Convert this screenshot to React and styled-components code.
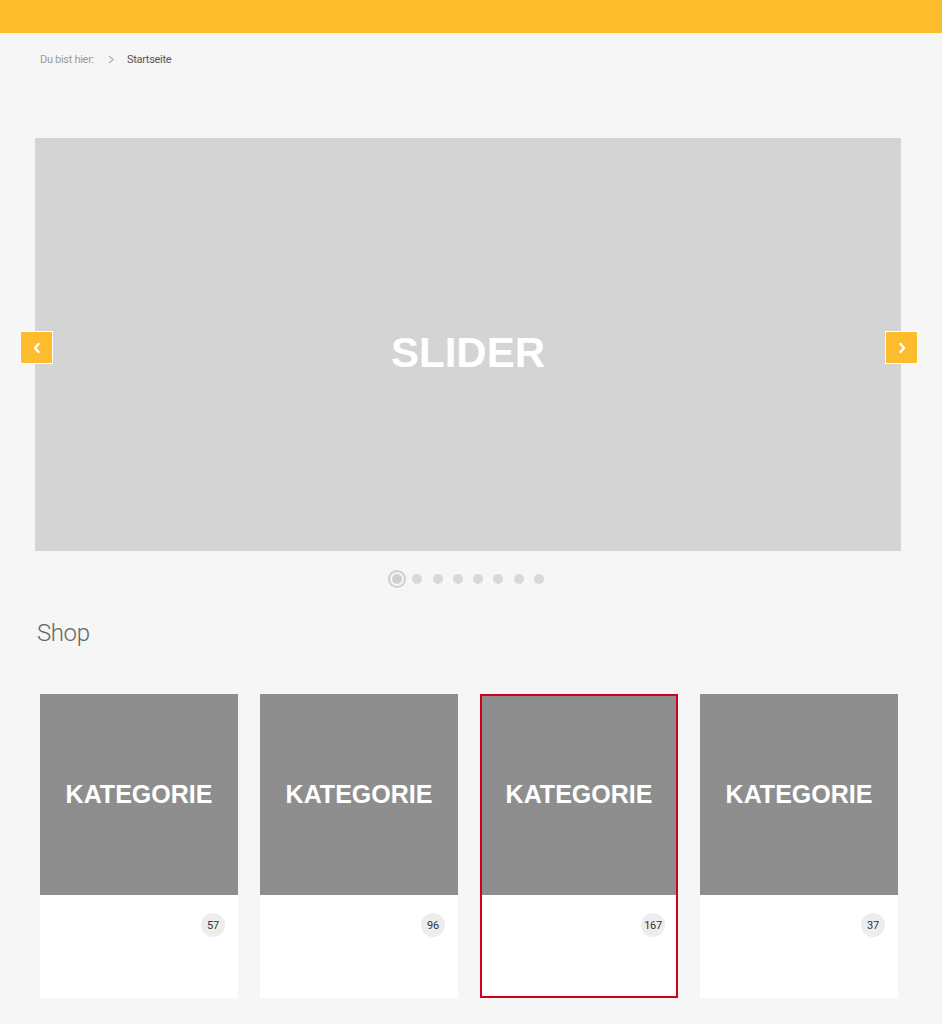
import * as React from 'react';
import styled, {createGlobalStyle, css} from 'styled-components';

const PAGE_BACK = '#f6f6f6';
const YELLOW = '#fdbc2c';
const SLIDE_BACK = '#d4d4d4';
const TILE_BACK = '#8e8e8e';
const ACTIVE_RED = '#d0021b';

const GlobalStyle = createGlobalStyle`
  body {
    margin: 0;
    background: ${PAGE_BACK};
    font-family: Roboto, "Liberation Sans", sans-serif;
  }
`;

const TopBar = styled.header`
  height: 33px;
  background: ${YELLOW};
`;

const Breadcrumb = styled.nav`
  display: flex;
  align-items: center;
  gap: 10px;
  padding: 19px 0 0 40px;
  height: 14px;
  font-size: 11px;
  letter-spacing: -0.3px;
  color: #9a9a9a;
`;

const Crumb = styled.span`
  color: ${({current}) => (current ? '#555' : '#9a9a9a')};
`;

const Separator = styled.svg`
  width: 8px;
  height: 9px;
  margin: 0 2px 0 3px;
`;

const SliderWrap = styled.section`
  position: relative;
  margin: 72px 41px 0 35px;
`;

const Slide = styled.div`
  height: 413px;
  background: ${SLIDE_BACK};
  display: flex;
  align-items: center;
  justify-content: center;
  padding-top: 17px;
  box-sizing: border-box;
`;

const SlideTitle = styled.h2`
  margin: 0;
  color: #fff;
  font-family: "Liberation Sans", Arial, sans-serif;
  font-weight: bold;
  font-size: 42px;
`;

const Arrow = styled.button`
  position: absolute;
  top: 193px;
  width: 33px;
  height: 33px;
  padding: 0;
  border: 1px solid #fff;
  background: ${YELLOW};
  display: flex;
  align-items: center;
  justify-content: center;
  cursor: pointer;
  ${({side}) =>
    side === 'left'
      ? css`
          left: -15px;
        `
      : css`
          right: -17px;
        `}
`;

const Dots = styled.div`
  display: flex;
  justify-content: center;
  gap: 10.3px;
  margin: 23px 0 0 0;
`;

const Dot = styled.span`
  width: 10px;
  height: 10px;
  border-radius: 50%;
  background: #d8d8d8;
  ${({active}) =>
    active &&
    css`
      background: #cfcfcf;
      box-shadow: 0 0 0 2px ${PAGE_BACK}, 0 0 0 4px #cfcfcf;
    `}
`;

const SectionTitle = styled.h2`
  margin: 34px 0 0 37px;
  font-size: 24px;
  line-height: 30px;
  font-weight: 300;
  color: #666;
  letter-spacing: -0.4px;
`;

const Grid = styled.div`
  display: grid;
  grid-template-columns: repeat(4, 198px);
  gap: 22px;
  margin: 46px 0 0 40px;
`;

const Tile = styled.a`
  display: flex;
  flex-direction: column;
  height: 304px;
  box-sizing: border-box;
  background: #fff;
  text-decoration: none;
  border: ${({active}) => (active ? `2px solid ${ACTIVE_RED}` : 'none')};
`;

const TileImage = styled.div`
  height: ${({active}) => (active ? '199px' : '201px')};
  background: ${TILE_BACK};
  display: flex;
  justify-content: center;
  padding-top: ${({active}) => (active ? '86px' : '88px')};
  box-sizing: border-box;
`;

const TileTitle = styled.span`
  color: #fff;
  font-family: "Liberation Sans", Arial, sans-serif;
  font-weight: bold;
  font-size: 25px;
  line-height: 25px;
`;

const TileBody = styled.div`
  flex: 1;
  display: flex;
  justify-content: flex-end;
  align-items: flex-start;
  padding: ${({active}) => (active ? '18px 11px 0 0' : '18px 13px 0 0')};
`;

const CountBadge = styled.span`
  width: 24px;
  height: 24px;
  border-radius: 50%;
  background: #ededed;
  color: #333;
  font-size: 11px;
  letter-spacing: -0.3px;
  display: flex;
  align-items: center;
  justify-content: center;
`;

const categories = [
  {count: 57},
  {count: 96},
  {count: 167, active: true},
  {count: 37},
];

function Chevron({dir}) {
  return (
    <svg width="10" height="12" viewBox="0 0 10 12">
      <path
        d={dir === 'left' ? 'M6.5 2 L3 6 L6.5 10' : 'M3.5 2 L7 6 L3.5 10'}
        fill="none"
        stroke="#fff"
        strokeWidth="2.4"
        strokeLinecap="round"
        strokeLinejoin="round"
      />
    </svg>
  );
}

function App() {
  return (
    <>
      <GlobalStyle />
      <TopBar />
      <Breadcrumb>
        <Crumb>Du bist hier:</Crumb>
        <Separator viewBox="0 0 8 9">
          <path d="M2 1 L6 4.5 L2 8" fill="none" stroke="#bbb" strokeWidth="1.6" />
        </Separator>
        <Crumb current>Startseite</Crumb>
      </Breadcrumb>

      <SliderWrap>
        <Slide>
          <SlideTitle>SLIDER</SlideTitle>
        </Slide>
        <Arrow side="left" aria-label="zurück">
          <Chevron dir="left" />
        </Arrow>
        <Arrow side="right" aria-label="weiter">
          <Chevron dir="right" />
        </Arrow>
        <Dots>
          {Array.from({length: 8}, (_, i) => (
            <Dot key={i} active={i === 0} />
          ))}
        </Dots>
      </SliderWrap>

      <SectionTitle>Shop</SectionTitle>

      <Grid>
        {categories.map((cat, i) => (
          <Tile key={i} active={cat.active}>
            <TileImage active={cat.active}>
              <TileTitle>KATEGORIE</TileTitle>
            </TileImage>
            <TileBody active={cat.active}>
              <CountBadge>{cat.count}</CountBadge>
            </TileBody>
          </Tile>
        ))}
      </Grid>
    </>
  );
}

export default App;
